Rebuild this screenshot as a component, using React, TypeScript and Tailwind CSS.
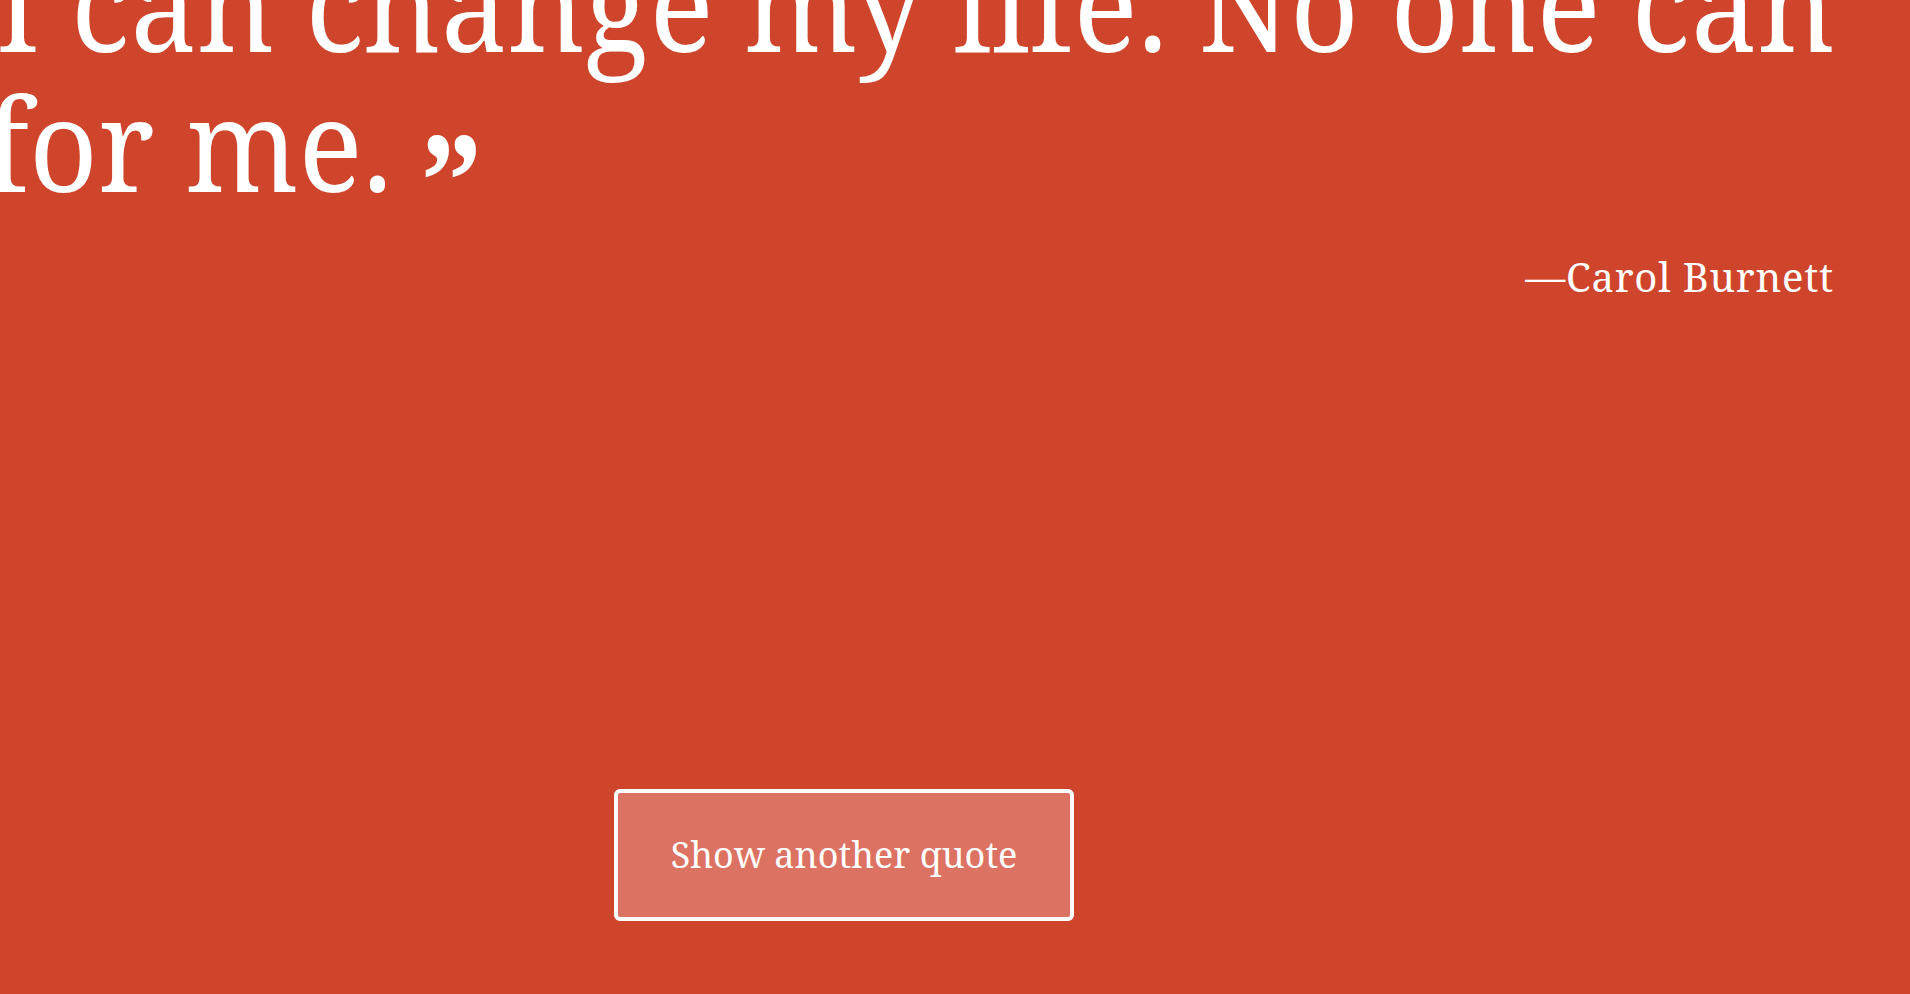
export default function App() {
  return (
    <div className="flex h-screen w-full flex-col overflow-hidden bg-[#cf452b] text-white font-['Noto_Serif','Liberation_Serif',serif]">
      <blockquote className="-mt-[67px] -ml-1 origin-left scale-x-[0.935] whitespace-nowrap text-[128px] leading-[140px]">
        <span className="block">I can change my life. No one can</span>
        <span className="-ml-3 block">
          for me.{" "}
          <span className="relative top-[42px] -ml-1 text-[138px] leading-[0px] font-bold">”</span>
        </span>
      </blockquote>

      <p className="mt-[38px] pr-[76px] text-right text-[40px] leading-[52px] tracking-[0.02em]">
        —Carol Burnett
      </p>

      <div className="flex-1" />

      <div className="mb-[73px] flex">
        <button className="ml-[614px] h-[132px] w-[460px] rounded-md border-4 border-white bg-[#dc7262] text-[36px] text-white">
          Show another quote
        </button>
      </div>
    </div>
  );
}
